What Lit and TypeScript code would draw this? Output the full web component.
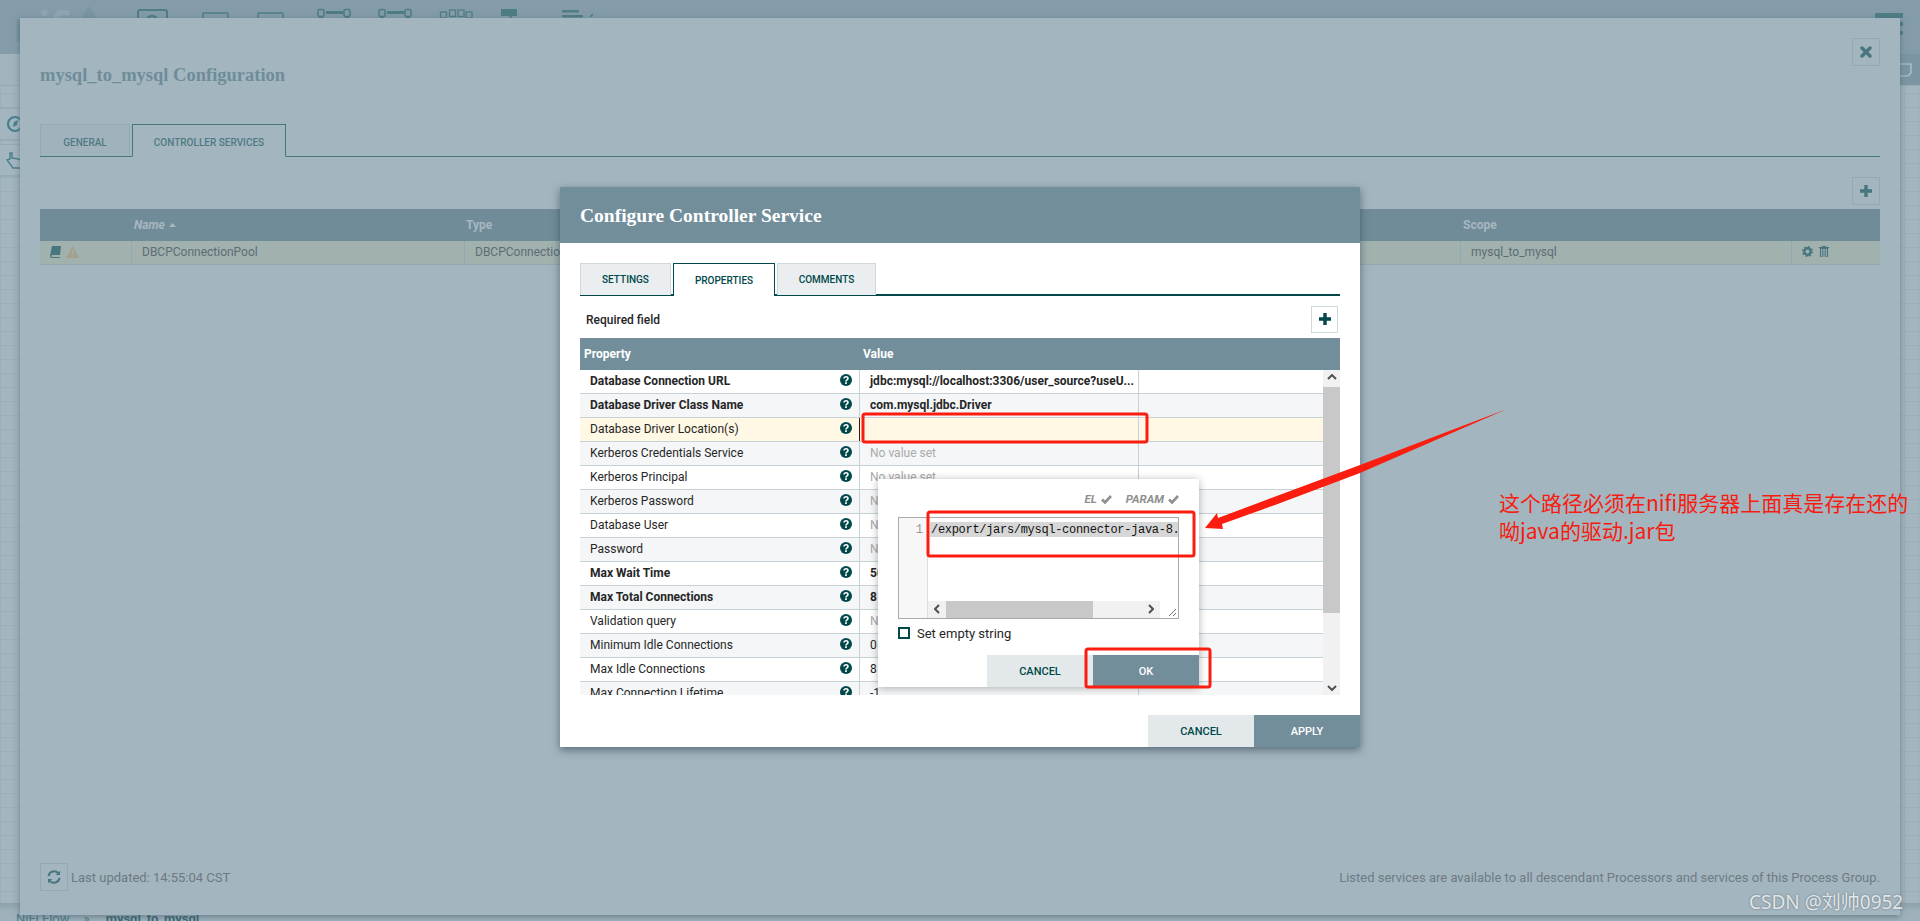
import { LitElement, html, css, svg } from "lit";
import { customElement } from "lit/decorators.js";

const ROWS: [string, string, boolean][] = [
  ["Database Connection URL", "jdbc:mysql://localhost:3306/user_source?useU...", true],
  ["Database Driver Class Name", "com.mysql.jdbc.Driver", true],
  ["Database Driver Location(s)", "", false],
  ["Kerberos Credentials Service", "No value set", false],
  ["Kerberos Principal", "No value set", false],
  ["Kerberos Password", "No value set", false],
  ["Database User", "No value set", false],
  ["Password", "No value set", false],
  ["Max Wait Time", "500 millis", true],
  ["Max Total Connections", "8", true],
  ["Validation query", "No value set", false],
  ["Minimum Idle Connections", "0", false],
  ["Max Idle Connections", "8", false],
  ["Max Connection Lifetime", "-1", false],
];

const help = html`<svg class="help" width="12" height="12" viewBox="0 0 12 12"><circle cx="6" cy="6" r="6" fill="#004849"/><path d="M4 4.6C4 3.4 4.9 2.8 6 2.8s2 .6 2 1.7c0 1.5-2 1.4-2 3" fill="none" stroke="#fff" stroke-width="1.6"/><rect x="5.1" y="8.2" width="1.8" height="1.7" fill="#fff"/></svg>`;
const check = html`<svg width="11" height="9" viewBox="0 0 11 9"><path d="M1 4.500l3 3 6-6.500" fill="none" stroke="#8f8f8f" stroke-width="2.600"/></svg>`;

@customElement("app-root")
export class AppRoot extends LitElement {
  static styles = css`
    :host { display: block; position: relative; width: 1920px; height: 921px; overflow: hidden; font-family: Roboto, "Liberation Sans", sans-serif; font-size: 12px; color: #262626; background: #a3b5bf; }
    .bg { display: flex; flex-direction: column; height: 921px; }
    .topbar { height: 54px; background: #849ca9; display: flex; justify-content: space-between; position: relative; overflow: hidden; flex: none; }
    .logo { position: absolute; left: 15px; top: 2px; font: 700 42px/52px Roboto, sans-serif; color: #8fa6b1; letter-spacing: 0; }
    .logo b { color: #7793a0; }
    .band { height: 32px; flex: none; background: #a1b3bd; display: flex; justify-content: flex-end; border-bottom: 1px solid #95aab5; box-sizing: border-box; }
    .band-end { width: 20px; background: #7c95a2; display: flex; align-items: center; justify-content: flex-start; }
    .canvas { flex: 1; background-color: #a3b5bf; background-image: linear-gradient(#9bafb9 1px, transparent 1px), linear-gradient(90deg, #9bafb9 1px, transparent 1px); background-size: 14px 14px; background-position: 0 7px; padding-top: 22px; display: flex; flex-direction: column; gap: 3px; }
    .widget { width: 40px; height: 33px; background: #a3b5bf; border-top: 1px solid #95aab5; border-bottom: 2px solid #95aab5; box-sizing: border-box; display: flex; align-items: center; padding-left: 6px; }
    .crumbs { height: 18px; flex: none; background: #9fb2bc; padding: 8px 0 0 16px; box-sizing: border-box; font-size: 13px; line-height: 16px; color: #4f7a84; display: flex; gap: 14px; white-space: nowrap; box-shadow: inset 0 8px 6px -4px #8ca1ac; }
    .crumbs b { color: #3f6a74; margin-left: 2px; }

    .outer { position: absolute; left: 20px; top: 18px; width: 1880px; height: 897px; box-sizing: border-box; padding: 20px 20px 24px; background: #a3b5bf; box-shadow: 0 2px 6px rgba(60,85,100,.55); display: flex; flex-direction: column; color: #5f6c74; }
    .o-head { height: 86px; display: flex; justify-content: space-between; align-items: flex-start; flex: none; }
    .o-title { margin-top: 25px; font: 700 18.5px/24px "Liberation Serif", serif; color: #6f8c99; }
    .icon-btn { width: 28px; height: 28px; box-sizing: border-box; border: 1px solid #93aab4; display: flex; align-items: center; justify-content: center; }
    .tabs { display: flex; gap: 2px; height: 33px; box-sizing: border-box; flex: none; }
    .o-tabs { border-bottom: 1px solid #47767f; }
    .tab { box-sizing: border-box; height: 33px; display: flex; align-items: center; justify-content: center; font-size: 10px; font-weight: 500; text-transform: uppercase; white-space: nowrap; }
    .o-tab { color: #4f7a84; background: #a0b3bc; border: 1px solid #93aab4; border-bottom: none; height: 32px; padding-top: 4px; }
    .o-tab.on { background: #a3b5bf; border: 1px solid #47767f; border-bottom: 1px solid #a3b5bf; height: 33px; }
    .o-tools { margin-top: 20px; height: 28px; display: flex; justify-content: flex-end; flex: none; }
    .o-table { margin-top: 4px; flex: none; }
    .o-hrow, .o-row { display: grid; grid-template-columns: 91px 333px 996px 331px 89px; }
    .o-hrow { height: 32px; background: #718c99; align-items: center; font-weight: 700; color: #a6b7c0; }
    .o-hrow span { padding-left: 3px; }
    .o-hrow .type { padding-left: 2px; }
    .o-hrow .scope { padding-left: 3px; }
    .o-hrow i { display: flex; align-items: center; gap: 4px; }
    .o-row { height: 24px; background: #a0b1ae; border-bottom: 1px solid #93a8b2; box-sizing: border-box; color: #5f6c74; }
    .o-row > div { display: flex; align-items: center; padding: 0 0 2px 10px; border-left: 1px solid #93a8b2; overflow: hidden; white-space: nowrap; box-sizing: border-box; }
    .o-row > .first { border-left: none; gap: 5px; }
    .o-row > .act { gap: 6px; padding-left: 10px; }
    .o-foot { margin-top: auto; display: flex; justify-content: space-between; align-items: center; height: 28px; color: #6d7982; font-size: 13px; }
    .o-foot > div { display: flex; align-items: center; gap: 3px; }
    .o-note { font-size: 13px; color: #6f7b84; }

    .inner { position: absolute; left: 560px; top: 187px; width: 800px; height: 560px; background: #fff; box-shadow: 0 3px 8px rgba(40,60,75,.6); display: flex; flex-direction: column; }
    .i-head { height: 56px; box-sizing: border-box; background: #728e9b; color: #fff; padding: 1px 0 0 20px; font: 700 19.5px/56px "Liberation Serif", serif; flex: none; }
    .i-body { padding: 20px 20px 0; display: flex; flex-direction: column; flex: none; }
    .i-tabs { border-bottom: 2px solid #004849; box-sizing: content-box; height: 31px; }
    .i-tabs .tab { color: #004849; background: #eaeef0; border: 1px solid #d0d8dc; border-bottom: none; height: 32px; }
    .i-tabs .tab.on { background: #fff; border: 1px solid #004849; border-bottom: none; height: 33px; position: relative; }
    .req { height: 42px; display: flex; align-items: center; justify-content: space-between; padding: 0 2px 0 6px; font-weight: 500; font-size: 12px; color: #262626; flex: none; box-sizing: border-box; }
    .req > span { margin-top: 6px; }
    .add { width: 27px; height: 27px; box-sizing: border-box; border: 1px solid #ccdadb; display: flex; align-items: center; justify-content: center; margin-top: 4px; }
    .p-head { height: 32px; background: #728e9b; color: #fff; font-weight: 700; display: grid; grid-template-columns: 279px 1fr; align-items: center; }
    .p-head span { padding-left: 4px; }
    .p-wrap { height: 325px; display: flex; }
    .p-rows { width: 743px; height: 325px; overflow: hidden; flex: none; }
    .p-row { height: 24px; box-sizing: border-box; display: grid; grid-template-columns: 279px 279px 1fr; border-bottom: 1px solid #c7d2d7; background: #fff; color: #262626; }
    .p-row.alt { background: #f4f6f7; }
    .p-row.warn { background: #fff8e4; }
    .p-row.strong { font-weight: 700; }
    .p-row > div { display: flex; align-items: center; white-space: nowrap; overflow: hidden; }
    .p-name { justify-content: space-between; padding: 0 7px 2px 10px; }
    .p-val { border-left: 1px solid #c7d2d7; padding: 0 0 2px 10px; }
    .p-row.warn .p-val { border-left-color: #222; }
    .p-val.empty { color: #aaa; font-weight: 400; }
    .p-last { border-left: 1px solid #c7d2d7; }
    .p-row .help { flex: none; margin-top: -2px; }
    .scroll { width: 17px; background: #f1f1f1; display: flex; flex-direction: column; align-items: center; justify-content: space-between; position: relative; }
    .scroll .thumb { position: absolute; left: 0; top: 17px; width: 17px; height: 226px; background: #c8c8c8; }
    .scroll svg { margin: 4px 0; }
    .i-foot { margin-top: auto; display: flex; justify-content: flex-end; flex: none; }
    .btn { width: 106px; height: 32px; display: flex; align-items: center; justify-content: center; font-size: 11px; font-weight: 500; text-transform: uppercase; }
    .btn.cancel { background: #e3e8eb; color: #004849; }
    .btn.ok { background: #728e9b; color: #fff; }

    .popup { position: absolute; left: 318px; top: 292px; width: 321px; height: 208px; background: #fff; box-shadow: 0 1px 8px rgba(0,0,0,.3); display: flex; flex-direction: column; }
    .flags { height: 38px; display: flex; justify-content: flex-end; align-items: center; gap: 14px; padding-right: 20px; box-sizing: border-box; font-size: 11.5px; font-weight: 700; font-style: italic; color: #8f8f8f; flex: none; padding-top: 2px; }
    .flags span { display: flex; align-items: center; gap: 4px; }
    .editor { margin-left: 20px; width: 281px; height: 102px; box-sizing: border-box; border: 1px solid #aaa; display: grid; grid-template-columns: 29px 1fr; flex: none; }
    .gutter { background: #f7f7f7; border-right: 1px solid #ddd; font: 12px/17px "Liberation Mono", monospace; color: #999; text-align: right; padding: 4px 4px 0 0; }
    .code-col { display: flex; flex-direction: column; min-width: 0; }
    .code { flex: 1; padding: 4px 0 0 2px; overflow: hidden; }
    .code span { display: block; width: 250px; height: 15px; overflow: hidden; background: #d7d7d7; padding-left: 1px; box-sizing: border-box; font: 12px/17px "Liberation Mono", monospace; letter-spacing: -.3px; white-space: pre; color: #111; }
    .hs { height: 17px; display: flex; align-items: center; flex: none; background: #f1f1f1; }
    .hs .a { width: 18px; display: flex; justify-content: center; flex: none; padding-bottom: 2px; }
    .hs .th { width: 147px; height: 17px; background: #c8c8c8; flex: none; }
    .hs .tr { width: 49px; flex: none; }
    .hs .corner { width: 18px; height: 17px; background: #fff; flex: none; margin-left: auto; }
    .empty-str { margin: 7px 0 0 20px; height: 14px; display: flex; align-items: center; gap: 7px; font-size: 13px; color: #262626; flex: none; }
    .box { width: 12px; height: 12px; box-sizing: border-box; border: 2px solid #004849; }
    .p-btns { margin-top: auto; display: flex; justify-content: flex-end; }

    .marks { position: absolute; left: 0; top: 0; pointer-events: none; }
    .note { position: absolute; left: 1499px; top: 489px; width: 420px; font: 21px/27.5px "Microsoft YaHei", "Noto Sans CJK SC", sans-serif; color: #f61c10; }
    .wm { position: absolute; left: 1749px; top: 889px; font: 19px/26px "Noto Sans", "Noto Sans CJK SC", sans-serif; color: #e2e6e8; text-shadow: 0 0 2px #5c6b73; white-space: nowrap; }
  `;

  private toolbar() {
    const c = "#4f7d86";
    const conn = (x: number) => svg`
      <rect x="${x}" y="9.5" width="6" height="7" rx="1.5" fill="none" stroke="${c}" stroke-width="1.6"/>
      <rect x="${x + 8}" y="11" width="17" height="3" fill="${c}"/>
      <rect x="${x + 26}" y="9.5" width="6" height="7" rx="1.5" fill="none" stroke="${c}" stroke-width="1.6"/>
      <rect x="${x + 1}" y="17" width="4" height="3" fill="${c}"/><rect x="${x + 27}" y="17" width="4" height="3" fill="${c}"/>`;
    return html`<svg width="620" height="54" viewBox="0 0 620 54">
      <path d="M80 20L89 6l9 14z" fill="#7995a2"/>
      <rect x="138" y="10" width="29" height="20" rx="2" fill="none" stroke="${c}" stroke-width="2"/>
      <circle cx="152" cy="22" r="6" fill="none" stroke="${c}" stroke-width="2.4"/>
      <rect x="203" y="13" width="25" height="12" rx="1" fill="none" stroke="${c}" stroke-width="1.5"/>
      <rect x="258" y="13" width="25" height="12" rx="1" fill="none" stroke="${c}" stroke-width="1.5"/>
      ${conn(318)}${conn(379)}
      <g fill="none" stroke="${c}" stroke-width="1.3">
        <rect x="440.5" y="12" width="6" height="6"/><rect x="449.5" y="10" width="6" height="6.5"/><rect x="458" y="10" width="6" height="6.5"/><rect x="466" y="12" width="6" height="6"/>
      </g>
      <path d="M501 9h16v7h-5l-1 3-2-3h-8z" fill="${c}"/>
      <rect x="562" y="10" width="17" height="2.4" rx="1.2" fill="${c}"/><rect x="562" y="15" width="21" height="2.4" rx="1.2" fill="${c}"/>
      <path d="M590 17l3-3" stroke="${c}" stroke-width="1.4"/>
    </svg>`;
  }

  private marks() {
    const r = "#fb1d0f";
    return html`<svg class="marks" width="1920" height="921" viewBox="0 0 1920 921">
      <rect x="863" y="414" width="284" height="28" rx="2" fill="none" stroke="${r}" stroke-width="3"/>
      <rect x="928" y="512" width="266" height="44" rx="2" fill="none" stroke="${r}" stroke-width="3"/>
      <rect x="1086" y="649" width="124" height="38" rx="2" fill="none" stroke="${r}" stroke-width="3"/>
      <polygon points="1507,409 1360,465 1218,518 1217,513 1205,528 1223,529 1222,524 1275,505 1360,473" fill="${r}"/>
    </svg>`;
  }

  render() {
    const teal = "#47767f";
    return html`
      <div class="bg">
        <div class="topbar">
          <div class="logo"><b>n</b>ifi</div>
          ${this.toolbar()}
          <svg width="60" height="54" viewBox="0 0 60 54"><rect x="15" y="13" width="28" height="5" rx="1" fill="#4f7d86"/><circle cx="41" cy="24" r="2.2" fill="#4f7d86"/><circle cx="41" cy="33" r="2.2" fill="#4f7d86"/></svg>
        </div>
        <div class="band"><div class="band-end"><svg width="12" height="14" viewBox="0 0 12 14"><path d="M0 1h11v9l-3 3H0" fill="none" stroke="#b9c8cf" stroke-width="1.2"/></svg></div></div>
        <div class="canvas">
          <div class="widget"><svg width="15" height="18" viewBox="0 0 15 18"><circle cx="9" cy="9" r="7" fill="none" stroke="#47808e" stroke-width="2.2"/><path d="M7 12l1-5 4-2-1 5z" fill="#47808e"/></svg></div>
          <div class="widget"><svg width="15" height="18" viewBox="0 0 15 18"><path d="M1 9l3-1V2h2v5l6 1 3 1v8H7z" fill="none" stroke="#47808e" stroke-width="1.4"/></svg></div>
        </div>
        <div class="crumbs"><span>NiFi Flow</span><span>»</span><b>mysql_to_mysql</b></div>
      </div>

      <div class="outer">
        <div class="o-head">
          <div class="o-title">mysql_to_mysql Configuration</div>
          <div class="icon-btn"><svg width="12" height="12" viewBox="0 0 12 12"><path d="M2 2l8 8M10 2l-8 8" stroke="${teal}" stroke-width="3.4" stroke-linecap="round"/></svg></div>
        </div>
        <div class="tabs o-tabs">
          <div class="tab o-tab" style="width:90px">General</div>
          <div class="tab o-tab on" style="width:154px">Controller Services</div>
        </div>
        <div class="o-tools"><div class="icon-btn"><svg width="14" height="14" viewBox="0 0 14 14"><path d="M7 1v12M1 7h12" stroke="${teal}" stroke-width="3.4"/></svg></div></div>
        <div class="o-table">
          <div class="o-hrow"><span></span><span><i>Name <svg width="7" height="4" viewBox="0 0 7 4"><path d="M0 4l3.5-4L7 4z" fill="#a6b7c0"/></svg></i></span><span class="type">Type</span><span class="scope">Scope</span><span></span></div>
          <div class="o-row">
            <div class="first">
              <svg width="11" height="12" viewBox="0 0 11 12"><path d="M2 0h9l-1 9H2.500a1 1 0 0 0 0 2H10v1H2a2 2 0 0 1-2-2z" fill="${teal}"/></svg>
              <svg width="13" height="12" viewBox="0 0 13 12"><path d="M6.500 0L13 12H0z" fill="#a59f8c"/><rect x="5.800" y="4" width="1.400" height="4.500" fill="#a0b1ae"/><rect x="5.800" y="9.400" width="1.400" height="1.500" fill="#a0b1ae"/></svg>
            </div>
            <div>DBCPConnectionPool</div>
            <div>DBCPConnectionPool 1.15.3</div>
            <div>mysql_to_mysql</div>
            <div class="act">
              <svg width="11" height="11" viewBox="0 0 11 11"><circle cx="5.500" cy="5.500" r="3.200" fill="none" stroke="${teal}" stroke-width="2.400"/><circle cx="5.500" cy="5.500" r="4.800" fill="none" stroke="${teal}" stroke-width="1.400" stroke-dasharray="1.900 1.870"/></svg>
              <svg width="10" height="11" viewBox="0 0 10 11"><path d="M0 1.500h10M3.500 1.500V.5h3v1M1.500 2.500h7V11h-7zM3.800 3.500V10M6.200 3.500V10" fill="none" stroke="${teal}" stroke-width="1.200"/></svg>
            </div>
          </div>
        </div>
        <div class="o-foot">
          <div>
            <div class="icon-btn"><svg width="14" height="14" viewBox="0 0 14 14"><path d="M1.500 6A5.600 5.600 0 0 1 11.300 3.200M12.500 8A5.600 5.600 0 0 1 2.700 10.800" fill="none" stroke="${teal}" stroke-width="2"/><path d="M13 .8V5H8.800zM1 13.200V9h4.200z" fill="${teal}"/></svg></div>
            <span>Last updated: 14:55:04 CST</span>
          </div>
          <span class="o-note">Listed services are available to all descendant Processors and services of this Process Group.</span>
        </div>
      </div>

      <div class="inner">
        <div class="i-head">Configure Controller Service</div>
        <div class="i-body">
          <div class="tabs i-tabs">
            <div class="tab" style="width:91px">Settings</div>
            <div class="tab on" style="width:102px">Properties</div>
            <div class="tab" style="width:99px">Comments</div>
          </div>
          <div class="req"><span>Required field</span><div class="add"><svg width="14" height="14" viewBox="0 0 14 14"><path d="M7 1v12M1 7h12" stroke="#004849" stroke-width="3.400"/></svg></div></div>
          <div class="p-head"><span>Property</span><span>Value</span></div>
          <div class="p-wrap">
            <div class="p-rows">
              ${ROWS.map(([name, val, strong], i) => html`
                <div class="p-row ${i % 2 ? "alt" : ""} ${i === 2 ? "warn" : ""} ${strong ? "strong" : ""}">
                  <div class="p-name"><span>${name}</span>${help}</div>
                  <div class="p-val ${val === "No value set" ? "empty" : ""}">${val}</div>
                  <div class="p-last"></div>
                </div>`)}
            </div>
            <div class="scroll">
              <div class="thumb"></div>
              <svg width="10" height="6" viewBox="0 0 10 6"><path d="M1 5l4-4 4 4" fill="none" stroke="#505050" stroke-width="2"/></svg>
              <svg width="10" height="6" viewBox="0 0 10 6"><path d="M1 1l4 4 4-4" fill="none" stroke="#505050" stroke-width="2"/></svg>
            </div>
          </div>
        </div>
        <div class="i-foot"><div class="btn cancel">Cancel</div><div class="btn ok">Apply</div></div>

        <div class="popup">
          <div class="flags"><span>EL ${check}</span><span>PARAM ${check}</span></div>
          <div class="editor">
            <div class="gutter">1</div>
            <div class="code-col">
              <div class="code"><span>/export/jars/mysql-connector-java-8.0.20.jar</span></div>
              <div class="hs">
                <div class="a"><svg width="6" height="10" viewBox="0 0 6 10"><path d="M5 1L1 5l4 4" fill="none" stroke="#505050" stroke-width="2"/></svg></div>
                <div class="th"></div>
                <div class="tr"></div>
                <div class="a"><svg width="6" height="10" viewBox="0 0 6 10"><path d="M1 1l4 4-4 4" fill="none" stroke="#505050" stroke-width="2"/></svg></div>
                <div class="corner"><svg width="18" height="17" viewBox="0 0 18 17"><path d="M9 15l7-7M13 15l3-3" stroke="#777" stroke-width="1"/></svg></div>
              </div>
            </div>
          </div>
          <div class="empty-str"><div class="box"></div><span>Set empty string</span></div>
          <div class="p-btns"><div class="btn cancel">Cancel</div><div class="btn ok">OK</div></div>
        </div>
      </div>

      ${this.marks()}
      <div class="note">这个路径必须在nifi服务器上面真是存在还的<br />呦java的驱动.jar包</div>
      <div class="wm">CSDN @刘帅0952</div>
    `;
  }
}
